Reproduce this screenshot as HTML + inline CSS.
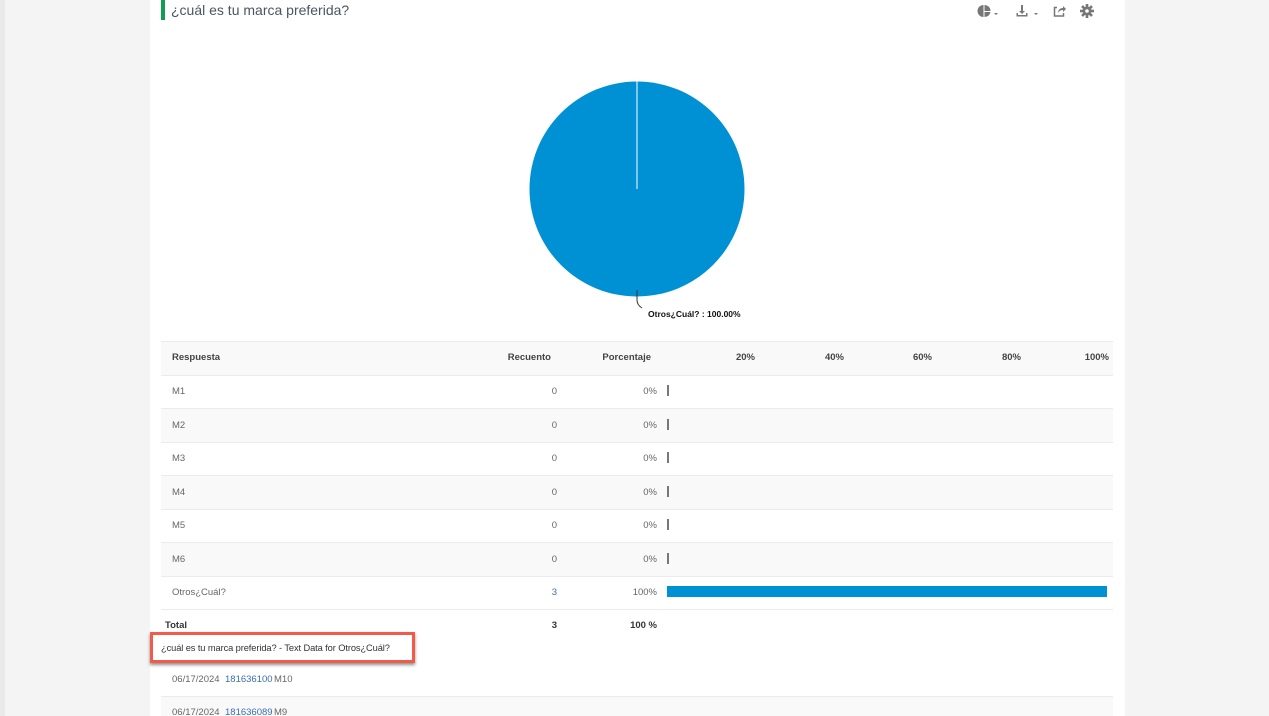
<!DOCTYPE html>
<html><head><meta charset="utf-8"><style>
*{margin:0;padding:0;box-sizing:border-box}
html,body{width:1269px;height:716px;overflow:hidden}
body{background:#f4f4f4;font-family:"Liberation Sans",sans-serif;position:relative}
.strip{position:absolute;left:0;top:0;width:5px;height:716px;background:#e9e9e9}
.card{position:absolute;left:150px;top:0;width:975px;height:716px;background:#fff}
.ab{position:absolute;white-space:nowrap}
.t{font-size:9.5px;color:#666}
.r{text-align:right;width:80px}
.row{position:absolute;left:161px;width:952px;height:33.5px;border-top:1px solid #ececec}
.g{background:#f9f9f9}
.h{font-weight:bold;color:#444}
</style></head><body>
<div class="strip"></div>
<div class="card"></div>
<div class="ab" style="left:161px;top:0;width:4px;height:20px;background:#0f9d58"></div>
<div class="ab" style="left:171px;top:2px;font-size:14px;color:#4a5563">¿cuál es tu marca preferida?</div>
<svg class="ab" style="left:970px;top:2px" width="130" height="18" viewBox="0 0 130 18">
<g fill="#777">
<path d="M13.5 3a6 6 0 1 0 0 12z"/><path d="M14.5 3a6 6 0 0 1 6 6h-6z"/><path d="M14.5 10h6a6 6 0 0 1-6 5z"/>
<path d="M24 11h4l-2 2z"/>
<path d="M51 3h2v6h2l-3 3-3-3h2z"/><path d="M46.5 11h1.5v2h8v-2h1.5v3.5h-11z"/>
<path d="M64 11h4l-2 2z"/>
</g>
<path d="M87 5.5h-2.5v8.5h9v-3" stroke="#777" stroke-width="1.5" fill="none"/>
<path d="M88 11c0-3 2-5 5-5V4l3 3-3 3V8c-2 0-4 1-5 3z" fill="#777"/>
<g transform="translate(117 9)" fill="#777">
<circle r="4.5"/>
<rect x="-1.3" y="-7" width="2.6" height="14"/>
<rect x="-1.3" y="-7" width="2.6" height="14" transform="rotate(45)"/>
<rect x="-1.3" y="-7" width="2.6" height="14" transform="rotate(90)"/>
<rect x="-1.3" y="-7" width="2.6" height="14" transform="rotate(135)"/>
<circle r="1.8" fill="#fff"/>
</g></svg>
<svg class="ab" style="left:520px;top:75px" width="240" height="250">
<circle cx="117" cy="114" r="107.5" fill="#0091d5"/>
<line x1="117" y1="6.5" x2="117" y2="114" stroke="#fff" stroke-width="1"/>
<path d="M117 215 v10 q0 5 5 8" stroke="#333" fill="none" stroke-width="1"/>
</svg>
<div class="ab" style="left:648px;top:309px;font-size:8.5px;font-weight:bold;color:#111">Otros¿Cuál? : 100.00%</div>

<div class="row g" style="top:341px"></div>
<div class="ab t h" style="left:172px;top:352px">Respuesta</div>
<div class="ab t h r" style="left:471px;top:352px">Recuento</div>
<div class="ab t h r" style="left:571px;top:352px">Porcentaje</div>
<div class="ab t h r" style="left:675px;top:352px">20%</div>
<div class="ab t h r" style="left:764px;top:352px">40%</div>
<div class="ab t h r" style="left:852px;top:352px">60%</div>
<div class="ab t h r" style="left:941px;top:352px">80%</div>
<div class="ab t h r" style="left:1029px;top:352px">100%</div>

<div class="row" style="top:374.5px"></div>
<div class="row g" style="top:408px"></div>
<div class="row" style="top:441.5px"></div>
<div class="row g" style="top:475px"></div>
<div class="row" style="top:508.5px"></div>
<div class="row g" style="top:542px"></div>
<div class="row" style="top:575.5px"></div>
<div class="row" style="top:609px"></div>
<div class="row g" style="top:696px;height:20px"></div>

<div class="ab t" style="left:172px;top:386px">M1</div><div class="ab t r" style="left:477px;top:386px">0</div><div class="ab t r" style="left:577px;top:386px">0%</div><div class="ab" style="left:667px;top:385px;width:2px;height:11px;background:#777"></div>
<div class="ab t" style="left:172px;top:420px">M2</div><div class="ab t r" style="left:477px;top:420px">0</div><div class="ab t r" style="left:577px;top:420px">0%</div><div class="ab" style="left:667px;top:419px;width:2px;height:11px;background:#777"></div>
<div class="ab t" style="left:172px;top:453px">M3</div><div class="ab t r" style="left:477px;top:453px">0</div><div class="ab t r" style="left:577px;top:453px">0%</div><div class="ab" style="left:667px;top:452px;width:2px;height:11px;background:#777"></div>
<div class="ab t" style="left:172px;top:487px">M4</div><div class="ab t r" style="left:477px;top:487px">0</div><div class="ab t r" style="left:577px;top:487px">0%</div><div class="ab" style="left:667px;top:486px;width:2px;height:11px;background:#777"></div>
<div class="ab t" style="left:172px;top:520px">M5</div><div class="ab t r" style="left:477px;top:520px">0</div><div class="ab t r" style="left:577px;top:520px">0%</div><div class="ab" style="left:667px;top:519px;width:2px;height:11px;background:#777"></div>
<div class="ab t" style="left:172px;top:554px">M6</div><div class="ab t r" style="left:477px;top:554px">0</div><div class="ab t r" style="left:577px;top:554px">0%</div><div class="ab" style="left:667px;top:553px;width:2px;height:11px;background:#777"></div>
<div class="ab t" style="left:172px;top:587px">Otros¿Cuál?</div><div class="ab t r" style="left:477px;top:587px;color:#3a6fb0">3</div><div class="ab t r" style="left:577px;top:587px">100%</div><div class="ab" style="left:667px;top:586px;width:440px;height:11px;background:#0091d5"></div>
<div class="ab t h" style="left:165px;top:620px;color:#333">Total</div><div class="ab t h r" style="left:477px;top:620px;color:#333">3</div><div class="ab t h r" style="left:577px;top:620px;color:#333">100 %</div>

<div class="ab" style="left:150px;top:632px;width:265px;height:31px;border:3px solid #f25a4a;background:#fff;box-shadow:0 2px 3px rgba(0,0,0,.45)"></div>
<div class="ab" style="left:161px;top:643px;font-size:9.3px;letter-spacing:-0.1px;color:#333">¿cuál es tu marca preferida? - Text Data for Otros¿Cuál?</div>

<div class="ab t" style="left:172px;top:674px">06/17/2024</div><div class="ab t" style="left:225px;top:674px;color:#3a6fb0">181636100</div><div class="ab t" style="left:274px;top:674px">M10</div>
<div class="ab t" style="left:172px;top:707px">06/17/2024</div><div class="ab t" style="left:225px;top:707px;color:#3a6fb0">181636089</div><div class="ab t" style="left:274px;top:707px">M9</div>
</body></html>
